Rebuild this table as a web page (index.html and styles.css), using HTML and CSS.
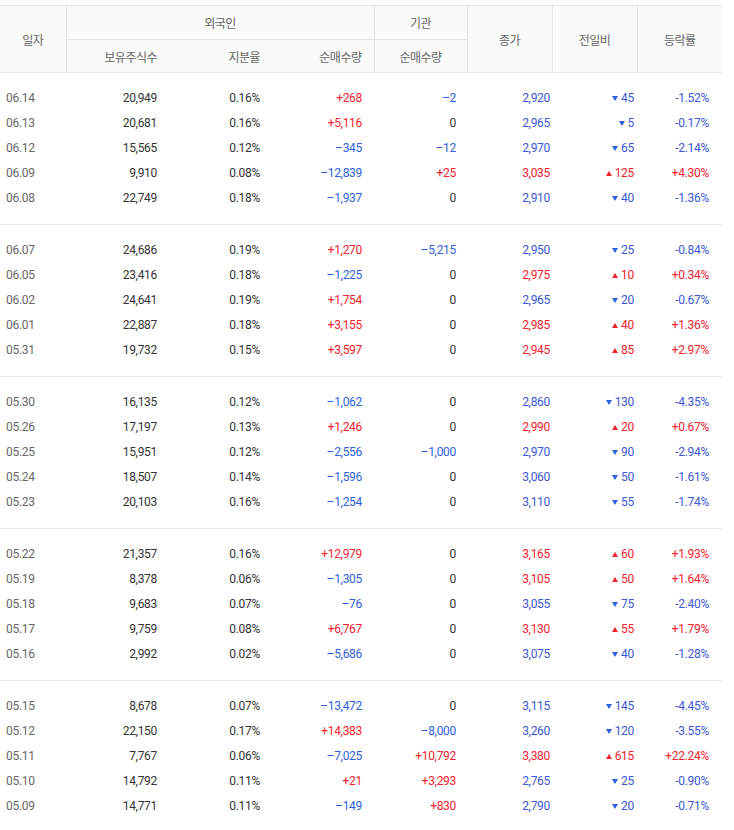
FILE: index.html
```html
<!DOCTYPE html>
<html lang="ko">
<head>
<meta charset="utf-8">
<title>외국인·기관 순매매 거래량</title>
<link rel="stylesheet" href="styles.css">
</head>
<body>
<table class="trade">
  <colgroup>
    <col class="c-date"><col class="c-hold"><col class="c-ratio"><col class="c-frgn"><col class="c-inst"><col class="c-close"><col class="c-diff"><col class="c-rate">
  </colgroup>
  <thead>
    <tr class="h1">
      <th rowspan="2" class="bl-r">일자</th>
      <th colspan="3" class="bl-r bb">외국인</th>
      <th class="bl-r bb">기관</th>
      <th rowspan="2" class="bl-r">종가</th>
      <th rowspan="2" class="bl-r">전일비</th>
      <th rowspan="2">등락률</th>
    </tr>
    <tr class="h2">
      <th class="r">보유주식수</th>
      <th class="r">지분율</th>
      <th class="r bl-r">순매수량</th>
      <th class="bl-r">순매수량</th>
    </tr>
  </thead>
  <tbody class="grp">
    <tr class="first"><td class="d">06.14</td><td>20,949</td><td>0.16%</td><td class="up">+268</td><td class="dn">–2</td><td class="dn2">2,920</td><td class="dn2"><i class="tri-dn"></i>45</td><td class="dn2 rate">-1.52%</td></tr>
    <tr><td class="d">06.13</td><td>20,681</td><td>0.16%</td><td class="up">+5,116</td><td>0</td><td class="dn2">2,965</td><td class="dn2"><i class="tri-dn"></i>5</td><td class="dn2 rate">-0.17%</td></tr>
    <tr><td class="d">06.12</td><td>15,565</td><td>0.12%</td><td class="dn">–345</td><td class="dn">–12</td><td class="dn2">2,970</td><td class="dn2"><i class="tri-dn"></i>65</td><td class="dn2 rate">-2.14%</td></tr>
    <tr><td class="d">06.09</td><td>9,910</td><td>0.08%</td><td class="dn">–12,839</td><td class="up">+25</td><td class="up">3,035</td><td class="up"><i class="tri-up"></i>125</td><td class="up rate">+4.30%</td></tr>
    <tr class="last"><td class="d">06.08</td><td>22,749</td><td>0.18%</td><td class="dn">–1,937</td><td>0</td><td class="dn2">2,910</td><td class="dn2"><i class="tri-dn"></i>40</td><td class="dn2 rate">-1.36%</td></tr>
  </tbody>
  <tbody class="grp">
    <tr class="first"><td class="d">06.07</td><td>24,686</td><td>0.19%</td><td class="up">+1,270</td><td class="dn">–5,215</td><td class="dn2">2,950</td><td class="dn2"><i class="tri-dn"></i>25</td><td class="dn2 rate">-0.84%</td></tr>
    <tr><td class="d">06.05</td><td>23,416</td><td>0.18%</td><td class="dn">–1,225</td><td>0</td><td class="up">2,975</td><td class="up"><i class="tri-up"></i>10</td><td class="up rate">+0.34%</td></tr>
    <tr><td class="d">06.02</td><td>24,641</td><td>0.19%</td><td class="up">+1,754</td><td>0</td><td class="dn2">2,965</td><td class="dn2"><i class="tri-dn"></i>20</td><td class="dn2 rate">-0.67%</td></tr>
    <tr><td class="d">06.01</td><td>22,887</td><td>0.18%</td><td class="up">+3,155</td><td>0</td><td class="up">2,985</td><td class="up"><i class="tri-up"></i>40</td><td class="up rate">+1.36%</td></tr>
    <tr class="last"><td class="d">05.31</td><td>19,732</td><td>0.15%</td><td class="up">+3,597</td><td>0</td><td class="up">2,945</td><td class="up"><i class="tri-up"></i>85</td><td class="up rate">+2.97%</td></tr>
  </tbody>
  <tbody class="grp">
    <tr class="first"><td class="d">05.30</td><td>16,135</td><td>0.12%</td><td class="dn">–1,062</td><td>0</td><td class="dn2">2,860</td><td class="dn2"><i class="tri-dn"></i>130</td><td class="dn2 rate">-4.35%</td></tr>
    <tr><td class="d">05.26</td><td>17,197</td><td>0.13%</td><td class="up">+1,246</td><td>0</td><td class="up">2,990</td><td class="up"><i class="tri-up"></i>20</td><td class="up rate">+0.67%</td></tr>
    <tr><td class="d">05.25</td><td>15,951</td><td>0.12%</td><td class="dn">–2,556</td><td class="dn">–1,000</td><td class="dn2">2,970</td><td class="dn2"><i class="tri-dn"></i>90</td><td class="dn2 rate">-2.94%</td></tr>
    <tr><td class="d">05.24</td><td>18,507</td><td>0.14%</td><td class="dn">–1,596</td><td>0</td><td class="dn2">3,060</td><td class="dn2"><i class="tri-dn"></i>50</td><td class="dn2 rate">-1.61%</td></tr>
    <tr class="last"><td class="d">05.23</td><td>20,103</td><td>0.16%</td><td class="dn">–1,254</td><td>0</td><td class="dn2">3,110</td><td class="dn2"><i class="tri-dn"></i>55</td><td class="dn2 rate">-1.74%</td></tr>
  </tbody>
  <tbody class="grp">
    <tr class="first"><td class="d">05.22</td><td>21,357</td><td>0.16%</td><td class="up">+12,979</td><td>0</td><td class="up">3,165</td><td class="up"><i class="tri-up"></i>60</td><td class="up rate">+1.93%</td></tr>
    <tr><td class="d">05.19</td><td>8,378</td><td>0.06%</td><td class="dn">–1,305</td><td>0</td><td class="up">3,105</td><td class="up"><i class="tri-up"></i>50</td><td class="up rate">+1.64%</td></tr>
    <tr><td class="d">05.18</td><td>9,683</td><td>0.07%</td><td class="dn">–76</td><td>0</td><td class="dn2">3,055</td><td class="dn2"><i class="tri-dn"></i>75</td><td class="dn2 rate">-2.40%</td></tr>
    <tr><td class="d">05.17</td><td>9,759</td><td>0.08%</td><td class="up">+6,767</td><td>0</td><td class="up">3,130</td><td class="up"><i class="tri-up"></i>55</td><td class="up rate">+1.79%</td></tr>
    <tr class="last"><td class="d">05.16</td><td>2,992</td><td>0.02%</td><td class="dn">–5,686</td><td>0</td><td class="dn2">3,075</td><td class="dn2"><i class="tri-dn"></i>40</td><td class="dn2 rate">-1.28%</td></tr>
  </tbody>
  <tbody class="grp">
    <tr class="first"><td class="d">05.15</td><td>8,678</td><td>0.07%</td><td class="dn">–13,472</td><td>0</td><td class="dn2">3,115</td><td class="dn2"><i class="tri-dn"></i>145</td><td class="dn2 rate">-4.45%</td></tr>
    <tr><td class="d">05.12</td><td>22,150</td><td>0.17%</td><td class="up">+14,383</td><td class="dn">–8,000</td><td class="dn2">3,260</td><td class="dn2"><i class="tri-dn"></i>120</td><td class="dn2 rate">-3.55%</td></tr>
    <tr><td class="d">05.11</td><td>7,767</td><td>0.06%</td><td class="dn">–7,025</td><td class="up">+10,792</td><td class="up">3,380</td><td class="up"><i class="tri-up"></i>615</td><td class="up rate">+22.24%</td></tr>
    <tr><td class="d">05.10</td><td>14,792</td><td>0.11%</td><td class="up">+21</td><td class="up">+3,293</td><td class="dn2">2,765</td><td class="dn2"><i class="tri-dn"></i>25</td><td class="dn2 rate">-0.90%</td></tr>
    <tr class="last"><td class="d">05.09</td><td>14,771</td><td>0.11%</td><td class="dn">–149</td><td class="up">+830</td><td class="dn2">2,790</td><td class="dn2"><i class="tri-dn"></i>20</td><td class="dn2 rate">-0.71%</td></tr>
  </tbody>
</table>
</body>
</html>
```

FILE: styles.css
```css
html, body {
  margin: 0;
  padding: 0;
  background: #fff;
}
body {
  padding-top: 5px;
  font-family: Roboto, "Noto Sans CJK KR", sans-serif;
  font-size: 12px;
  color: #333;
}
.trade {
  width: 722px;
  border-collapse: collapse;
  table-layout: fixed;
  letter-spacing: -0.3px;
}
.c-date { width: 66px; }
.c-hold { width: 103px; }
.c-ratio { width: 103px; }
.c-frgn { width: 102px; }
.c-inst { width: 93px; }
.c-close { width: 85px; }
.c-diff { width: 85px; }
.c-rate { width: 85px; }

.trade thead {
  background: #fafafa;
  border-top: 1px solid #e6e6e6;
  border-bottom: 1px solid #e6e6e6;
}
.trade th {
  font-family: "Noto Sans CJK KR", sans-serif;
  font-weight: normal;
  font-size: 12px;
  letter-spacing: -0.5px;
  color: #666;
  text-align: center;
  padding: 0;
}
.trade .h1 th { height: 33px; }
.trade .h2 th { height: 32px; }
.trade th.r { text-align: right; padding-right: 12px; }
.trade th.bl-r { border-right: 1px solid #e6e6e6; }
.trade th.bb { border-bottom: 1px solid #e6e6e6; }

.grp { border-bottom: 1px solid #e6e6e6; }
.trade td {
  height: 25px;
  line-height: 25px;
  padding: 0 12px 0 0;
  text-align: right;
  white-space: nowrap;
}
.trade td:nth-child(5) { padding-right: 11px; }
.trade td:nth-child(6) { padding-right: 2px; }
.trade td:nth-child(7) { padding-right: 3px; }
.trade td.rate { padding-right: 13px; }
.trade tr.first td { padding-top: 13px; }
.trade tr.last td { padding-bottom: 13px; }
.trade td.d {
  text-align: left;
  padding-left: 6px;
  color: #666;
}
.up { color: #f5222d; }
.dn { color: #2e5fe0; }
.dn2 { color: #3b58d6; }

.tri-dn, .tri-up {
  display: inline-block;
  width: 0;
  height: 0;
  border-left: 3.5px solid transparent;
  border-right: 3.5px solid transparent;
  margin-right: 3px;
  vertical-align: 1px;
}
.tri-dn { border-top: 5px solid #2e5fe0; }
.tri-up { border-bottom: 5px solid #f5222d; }
```
